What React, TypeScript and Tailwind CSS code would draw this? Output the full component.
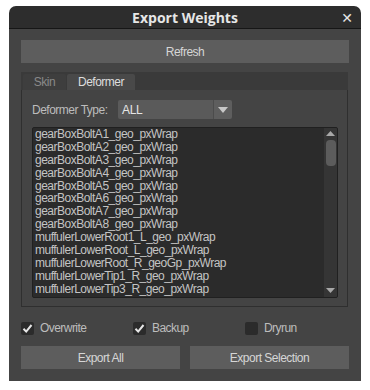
import React from "react";

const items = [
	"gearBoxBoltA1_geo_pxWrap",
	"gearBoxBoltA2_geo_pxWrap",
	"gearBoxBoltA3_geo_pxWrap",
	"gearBoxBoltA4_geo_pxWrap",
	"gearBoxBoltA5_geo_pxWrap",
	"gearBoxBoltA6_geo_pxWrap",
	"gearBoxBoltA7_geo_pxWrap",
	"gearBoxBoltA8_geo_pxWrap",
	"muffulerLowerRoot1_L_geo_pxWrap",
	"muffulerLowerRoot_L_geo_pxWrap",
	"muffulerLowerRoot_R_geoGp_pxWrap",
	"muffulerLowerTip1_R_geo_pxWrap",
	"muffulerLowerTip3_R_geo_pxWrap",
];

const Check = ({ checked, label }: { checked: boolean; label: string }) => (
	<div className="flex items-center w-[112px] shrink-0">
		<div className="w-[13px] h-[13px] bg-[#2b2b2b] rounded-[2px] flex items-center justify-center">
			{checked && (
				<svg width="11" height="11" viewBox="0 0 11 11">
					<path d="M1.5 5.8 L4.2 8.6 L9.5 2" stroke="#e6e6e6" strokeWidth="2" fill="none" />
				</svg>
			)}
		</div>
		<span className="ml-[6px] text-[12px] tracking-[-0.55px] text-[#bdbdbd]">{label}</span>
	</div>
);

const App = () => {
	return (
		<div className="w-[370px] h-[390px] bg-white pt-[6px] pl-[9px]" style={{ fontFamily: '"Liberation Sans", Arial, sans-serif' }}>
			<div className="w-[352px] h-[375px] flex flex-col rounded-t-[7px] overflow-hidden">
				{/* title bar */}
				<div className="h-[23px] bg-[#2d2d2d] border-b border-[#161616] relative flex items-center justify-center">
					<span className="text-[14px] font-bold text-[#e6e6e6]" style={{ fontFamily: '"Open Sans", "DejaVu Sans", sans-serif' }}>
						Export Weights
					</span>
					<span className="absolute right-[8px] top-[2px] text-[14px] font-bold text-[#e6e6e6]" style={{ fontFamily: '"DejaVu Sans", sans-serif' }}>
						✕
					</span>
				</div>

				<div className="flex-1 bg-[#444444] px-[12px] pt-[11px] flex flex-col">
					<div className="h-[23px] bg-[#5d5d5d] flex items-center justify-center text-[12px] tracking-[-0.5px] text-[#d6d6d6]">Refresh</div>

					{/* tabs */}
					<div className="mt-[9px] h-[18px] bg-[#3a3a3a] flex items-end pl-[2px] w-[327px]">
						<div className="w-[43px] h-[16px] bg-[#3e3e3e] rounded-t-[2px] flex items-center justify-center text-[12px] tracking-[-0.5px] text-[#8a8a8a]">Skin</div>
						<div className="ml-[1px] w-[68px] h-[16px] bg-[#494949] rounded-t-[2px] flex items-center justify-center text-[12px] tracking-[-0.5px] text-[#dedede]">Deformer</div>
					</div>
					<div className="w-[327px] h-[217px] border border-[#2f2f2f] border-t-0 bg-[#444444] px-[10px] pt-[10px] flex flex-col">
						<div className="flex items-center h-[19px]">
							<span className="w-[86px] text-[12px] tracking-[-0.5px] text-[#bcbcbc]">Deformer Type:</span>
							<div className="flex h-[19px] rounded-[2px] overflow-hidden">
								<div className="w-[95px] bg-[#5a5a5a] flex items-center pl-[4px] text-[12px] tracking-[-0.3px] text-[#e6e6e6]">ALL</div>
								<div className="w-[19px] bg-[#5e5e5e] border-l border-[#4c4c4c] flex items-center justify-center">
									<svg width="10" height="6" viewBox="0 0 10 6">
										<path d="M0 0 L10 0 L5 6 Z" fill="#c8c8c8" />
									</svg>
								</div>
							</div>
						</div>
						<div className="mt-[8px] h-[171px] w-[306px] bg-[#2b2b2b] border border-[#202020] rounded-[2px] flex overflow-hidden">
							<div className="flex-1 pl-[2px] overflow-hidden">
								{items.map((it) => (
									<div key={it} className="h-[12.9px] leading-[12.9px] text-[12px] tracking-[-0.5px] text-[#c4c4c4] whitespace-nowrap">
										{it}
									</div>
								))}
							</div>
							<div className="w-[13px] bg-[#353535] flex flex-col items-center pt-[3px] pb-[4px]">
								<svg width="9" height="5" viewBox="0 0 9 5">
									<path d="M0 5 L9 5 L4.5 0 Z" fill="#a8a8a8" />
								</svg>
								<div className="mt-[4px] w-[10px] h-[26px] bg-[#5c5c5c] rounded-[4px]" />
								<div className="flex-1" />
								<svg width="9" height="5" viewBox="0 0 9 5">
									<path d="M0 0 L9 0 L4.5 5 Z" fill="#a8a8a8" />
								</svg>
							</div>
						</div>
					</div>

					{/* options */}
					<div className="mt-[14px] flex items-center h-[14px]">
						<Check checked label="Overwrite" />
						<Check checked label="Backup" />
						<Check checked={false} label="Dryrun" />
					</div>

					<div className="mt-[11px] flex gap-[10px]">
						<div className="w-[159px] h-[23px] bg-[#5d5d5d] flex items-center justify-center text-[12px] tracking-[-0.5px] text-[#d6d6d6]">Export All</div>
						<div className="w-[159px] h-[23px] bg-[#5d5d5d] flex items-center justify-center text-[12px] tracking-[-0.5px] text-[#d6d6d6]">Export Selection</div>
					</div>
				</div>
			</div>
		</div>
	);
};

export default App;
